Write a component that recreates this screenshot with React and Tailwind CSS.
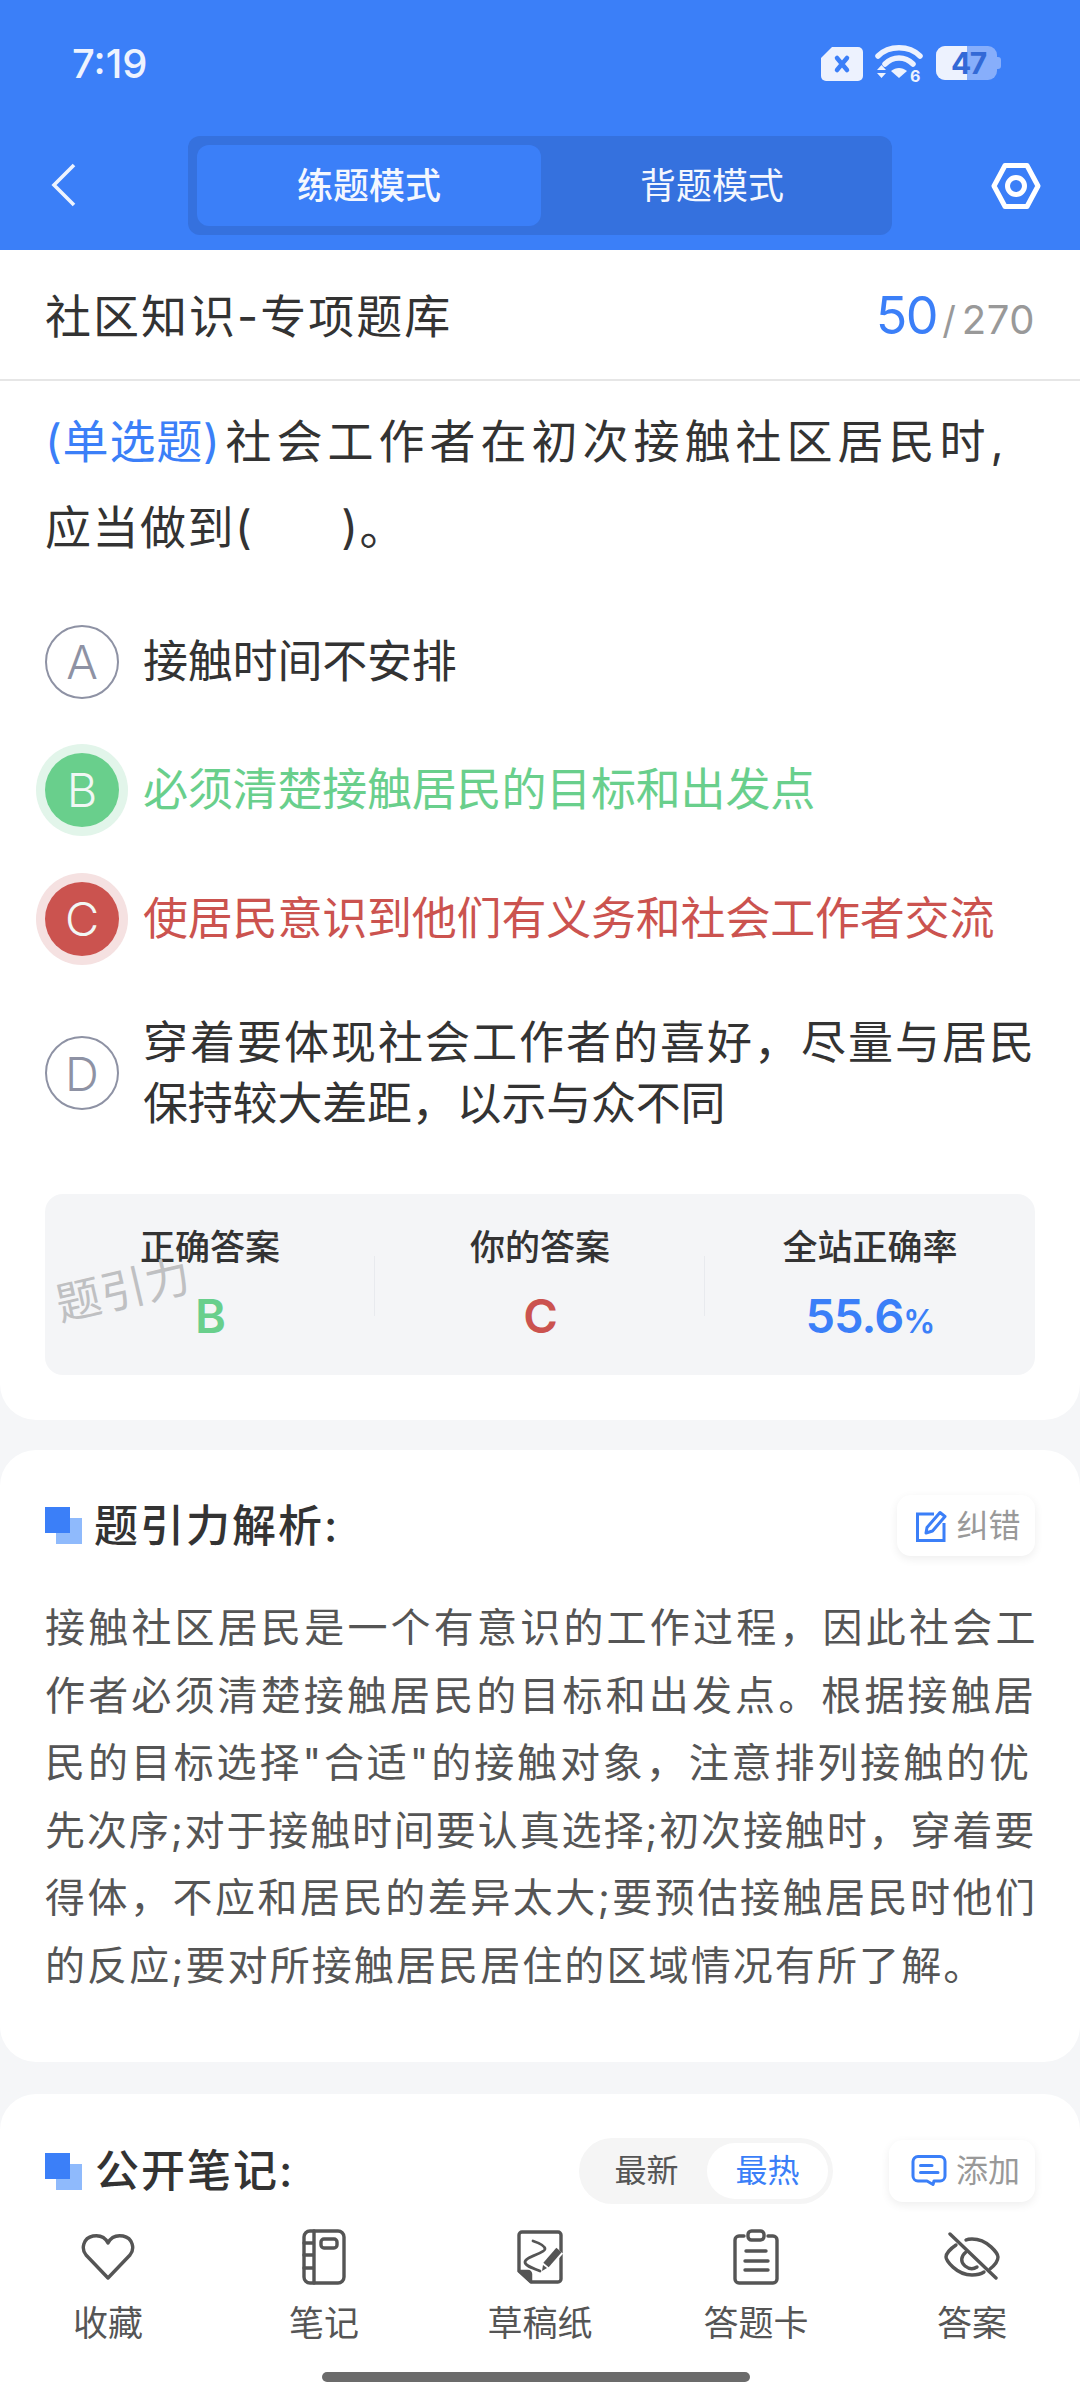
const F = { fontFamily: '"Inter","Noto Sans CJK SC",sans-serif' };

function Square() {
  return (
    <div className="relative w-[37px] h-[37px] shrink-0">
      <div className="absolute left-[11px] top-[11px] w-[26px] h-[26px] bg-[#8fbafc]" />
      <div className="absolute left-0 top-0 w-[25px] h-[26px] bg-[#3b7ff8]" />
    </div>
  );
}

function Letter({ l, kind }) {
  if (kind === "ok" || kind === "bad") {
    const ring = kind === "ok" ? "bg-[#e2f5ea]" : "bg-[#f5e1e1]";
    const fill = kind === "ok" ? "bg-[#69cf8c]" : "bg-[#cb534f]";
    return (
      <div className={`w-[92px] h-[92px] rounded-full ${ring} flex items-center justify-center shrink-0 ml-[-9px] mr-[15px]`}>
        <div className={`w-[74px] h-[74px] rounded-full ${fill} flex items-center justify-center text-[47px] font-light text-[#f2f7f4]`}>{l}</div>
      </div>
    );
  }
  return (
    <div className="w-[74px] h-[74px] rounded-full border-2 border-[#8e92a4] flex items-center justify-center text-[47px] font-light text-[#8e92a4] shrink-0 mr-[24px]">{l}</div>
  );
}

function Stat({ title, children, last }) {
  return (
    <div className="flex-1 relative flex flex-col items-center pt-[28px]">
      <div className="text-[35px] leading-[50px] font-medium text-[#333]">{title}</div>
      <div className="text-[47px] leading-[60px] font-semibold mt-[14px] tracking-[-1px]">{children}</div>
      {!last && <div className="absolute right-0 top-[62px] w-[1px] h-[60px] bg-[#e8eaee]" />}
    </div>
  );
}

function Tab({ label, icon }) {
  return (
    <div className="flex-1 flex flex-col items-center">
      <div className="h-[60px] flex items-center justify-center">{icon}</div>
      <div className="text-[35px] leading-[48px] mt-[12px] text-[#555]">{label}</div>
    </div>
  );
}

const S = { fill: "none", stroke: "#555", strokeWidth: 3.4, strokeLinecap: "round", strokeLinejoin: "round" };

export default function App() {
  return (
    <div className="relative w-[1080px] h-[2400px] overflow-hidden bg-[#f5f6f8]" style={F}>
      {/* header */}
      <div className="h-[250px] bg-[#3b7ff8] flex flex-col">
        <div className="h-[136px] flex items-start justify-between pl-[72px] pr-[79px] pt-[39px]">
          <div className="text-[40px] leading-[50px] font-medium text-[#eef3fe]">7:19</div>
          <div className="flex items-center gap-[11px] pt-[6px]">
            <svg width="44" height="36" viewBox="0 0 44 36">
              <path d="M12 1H38a5 5 0 0 1 5 5V30a5 5 0 0 1-5 5H6a5 5 0 0 1-5-5V12Z" fill="#edf2fe" />
              <path d="M17 12l10 12M27 12L17 24" stroke="#3b7ff8" strokeWidth="4.5" strokeLinecap="round" />
            </svg>
            <svg width="48" height="38" viewBox="0 0 48 38">
              <path d="M3 11C14 0 34 0 45 11" fill="none" stroke="#edf2fe" strokeWidth="5.500" strokeLinecap="round" />
              <path d="M10 19C18 11 30 11 38 19" fill="none" stroke="#edf2fe" strokeWidth="5.500" strokeLinecap="round" />
              <path d="M16 26c5-4 11-4 16 0l-8 7Z" fill="#edf2fe" />
              <path d="M2 25h9l-4.500-5ZM2 28h9l-4.500 5Z" fill="#edf2fe" />
              <text x="35" y="37" fontSize="16" fontWeight="700" fill="#edf2fe">6</text>
            </svg>
            <div className="relative w-[65px] h-[36px] ml-[2px]">
              <div className="absolute left-0 top-0 w-[61px] h-[34px] rounded-[9px] bg-[#87aefb]" />
              <div className="absolute right-0 top-[11px] w-[4px] h-[12px] rounded-r-[3px] bg-[#87aefb]" />
              <div className="absolute left-0 top-0 w-[31px] h-[34px] rounded-l-[9px] bg-[#edf2fe]" />
              <div className="absolute left-[15px] top-0 h-[34px] leading-[34px] text-[30px] font-bold tracking-[-1.500px] text-[#3369d6]">47</div>
            </div>
          </div>
        </div>
        <div className="flex items-start">
          <div className="w-[188px] pl-[50px] pt-[26px] shrink-0">
            <svg width="28" height="46" viewBox="0 0 28 46" fill="none">
              <path d="M24 3L4 23l20 20" stroke="#eef3fe" strokeWidth="3.600" />
            </svg>
          </div>
          <div className="w-[704px] h-[99px] bg-[#3571de] rounded-[12px] flex p-[9px]">
            <div className="w-[344px] h-[81px] rounded-[12px] bg-[#3b7ff8] flex items-center justify-center text-[36px] font-medium text-[#f4f7fe]">练题模式</div>
            <div className="flex-1 flex items-center justify-center text-[36px] text-[#f4f7fe]">背题模式</div>
          </div>
          <div className="flex-1 pl-[99px] pt-[27px]">
            <svg width="50" height="46" viewBox="0 0 50 46" fill="none">
              <path d="M14 2.500H36L47 23 36 43.500H14L3 23Z" stroke="#fff" strokeWidth="5" strokeLinejoin="round" />
              <circle cx="25" cy="23" r="8.500" stroke="#fff" strokeWidth="5" />
            </svg>
          </div>
        </div>
      </div>

      {/* question card */}
      <div className="h-[1170px] bg-white rounded-b-[36px] flex flex-col">
        <div className="h-[131px] border-b-2 border-[#e6e6e6] flex items-center justify-between px-[45px] pt-[3px]">
          <div className="text-[46px] text-[#333] tracking-[2px]">社区知识-专项题库</div>
          <div className="flex items-baseline">
            <span className="text-[52px] text-[#3b7ff8] mr-[5px] tracking-[-1.500px]">50</span>
            <span className="text-[38px] text-[#999]">/</span>
            <span className="text-[40px] text-[#999] ml-[6px] tracking-[0.5px]">270</span>
          </div>
        </div>
        <div className="px-[45px] pt-[17px] text-[46px] leading-[86px] text-[#333] whitespace-nowrap">
          <span className="text-[#3b7ff8] tracking-[0.8px]">(单选题)</span><span className="tracking-[5px] ml-[5px]">社会工作者在初次接触社区居民时,</span>
          <br />
          <span className="tracking-[1.500px]">应当做到(<span className="inline-block w-[88px]" />)。</span>
        </div>
        <div className="flex items-center px-[45px] mt-[55px] h-[74px] text-[45px] text-[#333] tracking-[-0.2px]">
          <Letter l="A" />接触时间不安排
        </div>
        <div className="flex items-center px-[45px] mt-[45px] h-[92px] text-[45px] text-[#69cf8c] tracking-[-0.2px]">
          <Letter l="B" kind="ok" />必须清楚接触居民的目标和出发点
        </div>
        <div className="flex items-center px-[45px] mt-[37px] h-[92px] text-[45px] text-[#cb534f] tracking-[-0.2px]">
          <Letter l="C" kind="bad" />使居民意识到他们有义务和社会工作者交流
        </div>
        <div className="flex items-center px-[45px] mt-[47px] text-[45px] leading-[61px] text-[#333] whitespace-nowrap">
          <Letter l="D" />
          <div>
            <div className="tracking-[2px]">穿着要体现社会工作者的喜好，尽量与居民</div>
            <div className="tracking-[-0.2px]">保持较大差距，以示与众不同</div>
          </div>
        </div>
        <div className="relative mx-[45px] mt-[60px] h-[181px] rounded-[18px] bg-[#f4f5f7] flex">
          <Stat title="正确答案"><span className="text-[#69cf8c]">B</span></Stat>
          <Stat title="你的答案"><span className="text-[#cb534f]">C</span></Stat>
          <Stat title="全站正确率" last><span className="text-[#3b7ff8]">55.6<span className="text-[32px]">%</span></span></Stat>
          <div className="absolute left-[10px] top-[71px] -rotate-[13deg] text-[45px] leading-[50px] text-[#bfc0c2] tracking-[0.5px]">题引力</div>
        </div>
      </div>

      {/* analysis card */}
      <div className="mt-[30px] h-[612px] bg-white rounded-[36px] px-[45px]">
        <div className="flex items-center justify-between pt-[45px]">
          <div className="flex items-center">
            <Square />
            <div className="ml-[12px] text-[44px] leading-[56px] font-medium text-[#333] tracking-[2px]">题引力解析:</div>
          </div>
          <div className="w-[138px] h-[61px] rounded-[14px] bg-white shadow-[0_3px_10px_rgba(0,0,0,0.07)] flex items-center justify-center gap-[6px] pl-[3px]">
            <svg width="36" height="34" viewBox="0 0 34 34" fill="none" stroke="#3b7ff8" strokeWidth="3">
              <path d="M19 5H2.500V31.500H29V14" />
              <path d="M12 18.500L25 3.500l5 4L17.500 22 11 24Z" strokeLinejoin="round" />
            </svg>
            <span className="text-[32px] text-[#999]">纠错</span>
          </div>
        </div>
        <div className="mt-[38px] text-[40px] leading-[67.500px] text-[#555] whitespace-nowrap">
          <div className="tracking-[3.200px]">接触社区居民是一个有意识的工作过程，因此社会工</div>
          <div className="tracking-[3.130px]">作者必须清楚接触居民的目标和出发点。根据接触居</div>
          <div className="tracking-[2.900px]">民的目标选择"合适"的接触对象，注意排列接触的优</div>
          <div className="tracking-[1.880px]">先次序;对于接触时间要认真选择;初次接触时，穿着要</div>
          <div className="tracking-[2.520px]">得体，不应和居民的差异太大;要预估接触居民时他们</div>
          <div className="tracking-[2.100px]">的反应;要对所接触居民居住的区域情况有所了解。</div>
        </div>
      </div>

      {/* notes card */}
      <div className="mt-[32px] h-[400px] bg-white rounded-t-[36px] px-[45px] pt-[44px]">
        <div className="flex items-center">
          <Square />
          <div className="ml-[13px] text-[44px] leading-[56px] font-medium text-[#333] tracking-[2px]">公开笔记:</div>
          <div className="ml-auto w-[254px] h-[66px] rounded-full bg-[#f5f5f5] flex items-center p-[5px] text-[32px]">
            <div className="w-[123px] text-center text-[#555] pl-[2px]">最新</div>
            <div className="flex-1 h-[56px] rounded-full bg-white flex items-center justify-center text-[#3b7ff8]">最热</div>
          </div>
          <div className="ml-[56px] w-[146px] h-[62px] rounded-[14px] bg-white shadow-[0_3px_10px_rgba(0,0,0,0.07)] flex items-center justify-center gap-[11px] pl-[7px]">
            <svg width="36" height="32" viewBox="0 0 36 32" fill="none" stroke="#3b7ff8" strokeWidth="3" strokeLinecap="round" strokeLinejoin="round">
              <path d="M7 1.500H29a5 5 0 0 1 5 5V21a5 5 0 0 1-5 5h-6l-1 3.500-6-3.500H7a5 5 0 0 1-5-5V6.500a5 5 0 0 1 5-5Z" />
              <path d="M9.500 10.500H21M9.500 17.500H27" />
            </svg>
            <span className="text-[32px] text-[#999] -ml-[2px]">添加</span>
          </div>
        </div>
      </div>

      {/* bottom toolbar over content */}
      <div className="absolute left-0 right-0 bottom-0 h-[180px] bg-white">
        <div className="flex pt-[7px]">
          <Tab label="收藏" icon={
            <svg width="54" height="48" viewBox="0 0 54 48">
              <path d="M27 45L5 22C0 16 2 5 12 3c6-1 12 1 15 7 3-6 9-8 15-7 10 2 12 13 7 19Z" {...S} />
            </svg>} />
          <Tab label="笔记" icon={
            <svg width="44" height="56" viewBox="0 0 44 56">
              <rect x="2" y="2" width="40" height="52" rx="6" {...S} />
              <path d="M12 2V54M2 14H12M2 26H12M2 39H12" {...S} />
              <rect x="19" y="10" width="16" height="9" rx="3" {...S} />
            </svg>} />
          <Tab label="草稿纸" icon={
            <svg width="46" height="54" viewBox="0 0 46 54">
              <path d="M5 2H41a3 3 0 0 1 3 3V49a3 3 0 0 1-3 3H14L2 41V5a3 3 0 0 1 3-3Z" {...S} />
              <path d="M2 41h9a3 3 0 0 1 3 3v8Z" fill="#555" stroke="#555" strokeWidth="2.500" strokeLinejoin="round" />
              <path d="M16 11C22 13 28 16 28 19C28 23 8 27 8 32C8 36 16 38 23 41" fill="none" stroke="#555" strokeWidth="2.800" strokeLinecap="round" />
              <path d="M27 37L42 20" stroke="#fff" strokeWidth="11" />
              <path d="M29 35L42 20" stroke="#555" strokeWidth="7" />
              <path d="M25 41l1-6 4 3Z" fill="#555" />
            </svg>} />
          <Tab label="答题卡" icon={
            <svg width="46" height="56" viewBox="0 0 46 56">
              <path d="M11 7H6a4 4 0 0 0-4 4V50a4 4 0 0 0 4 4H40a4 4 0 0 0 4-4V11a4 4 0 0 0-4-4H35" {...S} />
              <rect x="15" y="2" width="16" height="9" rx="3.500" {...S} />
              <path d="M13 22H33M12 32H35M12 41H35" {...S} />
            </svg>} />
          <Tab label="答案" icon={
            <svg width="56" height="50" viewBox="0 0 56 50">
              <path d="M12 13C6 17 2 22 2 25c0 3 10 18 26 18 5 0 9-1 12-3M22 8c2-1 4-1 6-1 16 0 26 15 26 18 0 3-3 8-8 12" {...S} />
              <path d="M22 20c-5 4-6 10-1 14s9 3 12 1" fill="none" stroke="#555" strokeWidth="3.400" strokeLinecap="round" />
              <path d="M6 2L52 46" {...S} />
            </svg>} />
        </div>
        <div className="absolute left-[322px] top-[152px] w-[428px] h-[10px] rounded-full bg-[#6b6b6b]" />
      </div>
    </div>
  );
}
